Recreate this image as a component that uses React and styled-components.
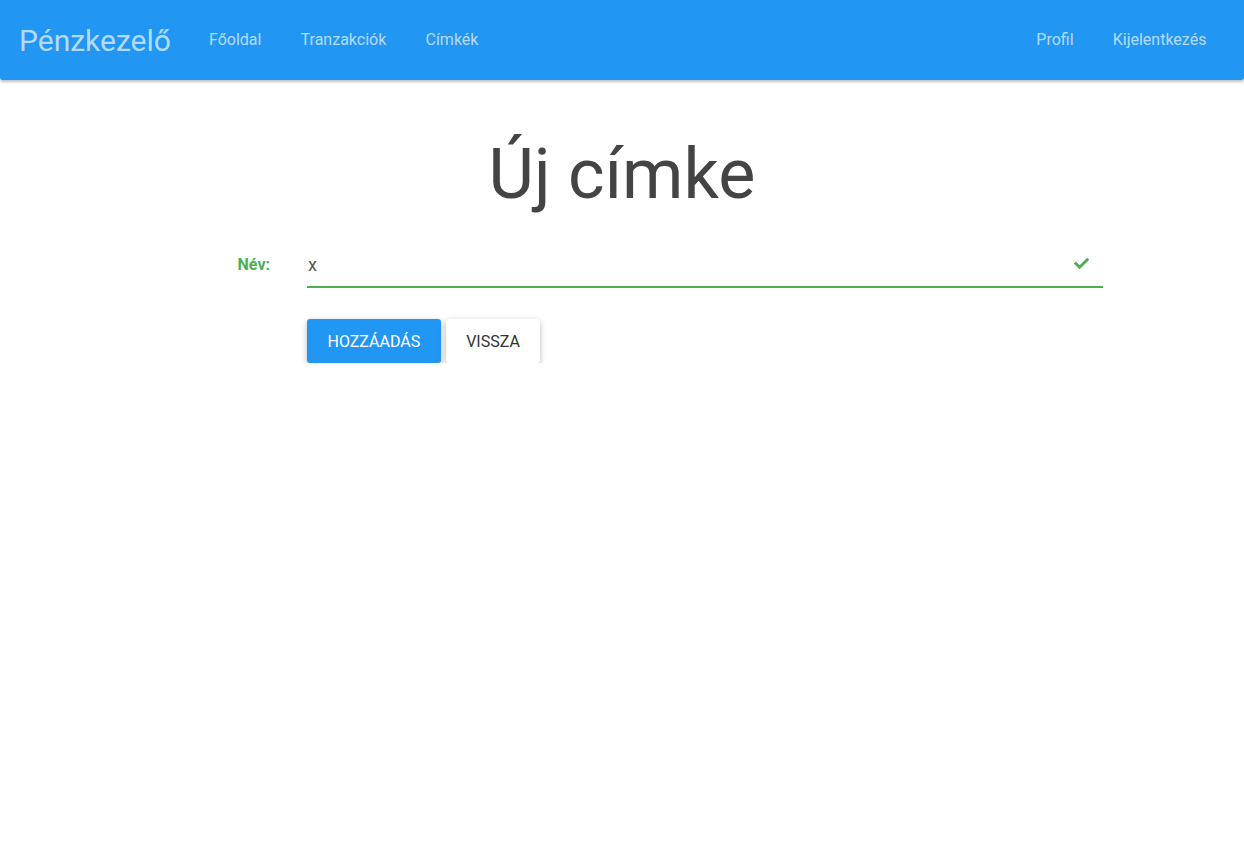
import React from 'react'
import styled, { createGlobalStyle } from 'styled-components'
import { FaCheck } from 'react-icons/fa'

const GlobalStyle = createGlobalStyle`
	body {
		margin: 0;
		background: #fff;
		font-family: Roboto, 'Liberation Sans', sans-serif;
	}
`

const Nav = styled.nav`
	height: 80px;
	background-color: #2196f3;
	border-radius: 0 0 3px 3px;
	box-shadow: 0 2px 3px rgba(0, 0, 0, 0.25);
	display: flex;
	align-items: center;
	padding: 0 18px 0 19px;
	color: rgba(255, 255, 255, 0.67);
`

const Brand = styled.a`
	font-size: 30px;
	margin-right: 18.5px;
	color: inherit;
	text-decoration: none;
`

const NavList = styled.div`
	display: flex;
	align-items: center;
	margin-left: ${(p) => (p.right ? 'auto' : '0')};
`

const NavLink = styled.a`
	font-size: 16px;
	padding: 0 19.6px;
	line-height: 80px;
	color: inherit;
	text-decoration: none;
`

const Title = styled.h1`
	margin: 52px 0 0;
	text-align: center;
	font-size: 70px;
	font-weight: 400;
	line-height: 84px;
	color: #444;
`

const Form = styled.form`
	display: grid;
	grid-template-columns: 307px 796px;
	row-gap: 31px;
	margin-top: 28px;
`

const Label = styled.label`
	justify-self: end;
	padding-right: 37px;
	padding-top: 11px;
	font-size: 16px;
	font-weight: 700;
	color: #4caf50;
`

const Field = styled.div`
	border-bottom: 2px solid #4caf50;
	height: 44px;
	display: flex;
	align-items: center;
	padding-bottom: 2px;
	box-sizing: border-box;
`

const Input = styled.input`
	border: none;
	outline: none;
	flex: 1;
	font-family: inherit;
	font-size: 18px;
	color: #555;
	padding: 0 1px;
	background: transparent;
`

const Check = styled.span`
	display: flex;
	color: #4caf50;
	margin-right: 14px;
	margin-top: -2px;
`

const Buttons = styled.div`
	grid-column: 2;
	display: flex;
	gap: 5px;
`

const Button = styled.button`
	height: 44px;
	padding: 0 20.5px;
	border: none;
	border-radius: 3px;
	font-family: inherit;
	font-size: 16px;
	text-transform: uppercase;
	cursor: pointer;
	background: ${(p) => (p.primary ? '#2196f3' : '#fff')};
	color: ${(p) => (p.primary ? '#fff' : '#333')};
	box-shadow: 0 2px 5px rgba(0, 0, 0, 0.16), 0 2px 8px rgba(0, 0, 0, 0.12);
`

function App() {
	return (
		<>
			<GlobalStyle />
			<Nav>
				<Brand href='#'>Pénzkezelő</Brand>
				<NavList>
					<NavLink href='#'>Főoldal</NavLink>
					<NavLink href='#'>Tranzakciók</NavLink>
					<NavLink href='#'>Címkék</NavLink>
				</NavList>
				<NavList right>
					<NavLink href='#'>Profil</NavLink>
					<NavLink href='#'>Kijelentkezés</NavLink>
				</NavList>
			</Nav>
			<Title>Új címke</Title>
			<Form onSubmit={(e) => e.preventDefault()}>
				<Label htmlFor='nev'>Név:</Label>
				<Field>
					<Input id='nev' defaultValue='x' />
					<Check>
						<FaCheck size={15} />
					</Check>
				</Field>
				<Buttons>
					<Button primary type='submit'>Hozzáadás</Button>
					<Button type='button'>Vissza</Button>
				</Buttons>
			</Form>
		</>
	)
}

export default App
